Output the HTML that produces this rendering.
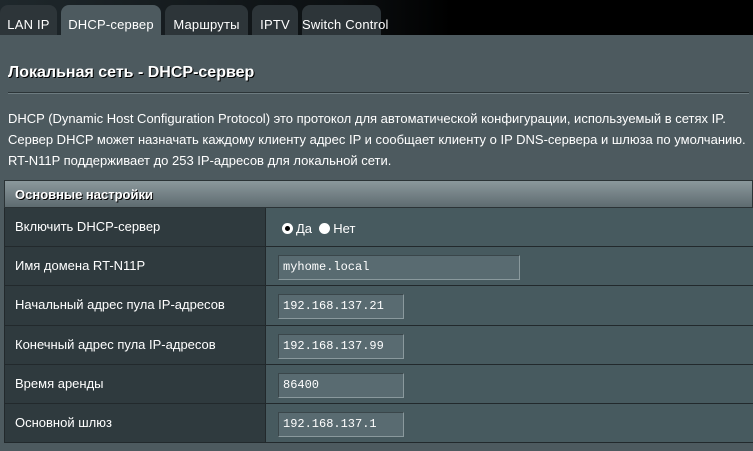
<!DOCTYPE html>
<html><head><meta charset="utf-8"><style>
*{margin:0;padding:0;box-sizing:border-box}
body{width:753px;height:451px;background:#4d5a5f;font-family:"Liberation Sans",Arial,sans-serif;color:#fff;font-size:13px;position:relative;overflow:hidden}
.top{position:absolute;left:0;top:0;width:753px;height:35px;background:linear-gradient(90deg,#1f282c 0%,#0c1012 45%,#000 60%,#000 100%)}
.tab{position:absolute;top:5px;height:30px;background:#2d3539;border-radius:8px 8px 0 0;font-size:13px;line-height:28px;padding-top:6px;text-align:center;color:#fff;white-space:nowrap;letter-spacing:0.2px}
.tab.act{background:#4d5a5f}
h1{position:absolute;left:8px;top:64px;font-size:16px;font-weight:bold;text-shadow:1px 1px 0 #000}
.sep{position:absolute;left:8px;top:92px;width:741px;height:2px;background:#2c3538;border-bottom:1px solid #6d7b80}
.desc{position:absolute;left:8px;top:108px;line-height:21px;font-size:13px}
.tbl{position:absolute;left:4px;top:180px;width:749px}
.hd{height:28px;background:linear-gradient(#8b989c,#5e6b70);border:1px solid #2b3336;font-weight:bold;font-size:13px;line-height:27px;padding-left:10px;text-shadow:1px 1px 0 #000}
.row{display:flex;height:39.2px;border-bottom:1px solid #22292c}
.l{width:262px;background:#2f3a3e;padding-left:10px;line-height:38px;border-right:1px solid #22292c;border-left:1px solid #22292c}
.v{flex:1;background:#475a5f;position:relative}
.in{position:absolute;left:12px;top:8px;height:25px;background:#596b71;border:1px solid #8a999d;border-top-color:#3a464a;border-left-color:#3a464a;font-family:"Liberation Mono",monospace;font-size:12px;line-height:23px;padding-left:4px}
.rad{position:absolute;left:16px;top:13px;font-size:13px;display:flex;align-items:center}
.dot{width:11px;height:11px;border-radius:50%;background:#fff;display:inline-block;margin-right:3px;position:relative}
.dot.on::after{content:"";position:absolute;left:3px;top:3px;width:5px;height:5px;border-radius:50%;background:#000}
</style></head><body>
<div class="top"></div>
<div class="tab" style="left:0;width:57px">LAN IP</div>
<div class="tab act" style="left:61px;width:100px">DHCP-сервер</div>
<div class="tab" style="left:165px;width:83px">Маршруты</div>
<div class="tab" style="left:252px;width:46px">IPTV</div>
<div class="tab" style="left:302px;width:79px">Switch Control</div>
<h1>Локальная сеть - DHCP-сервер</h1>
<div class="sep"></div>
<div class="desc">DHCP (Dynamic Host Configuration Protocol) это протокол для автоматической конфигурации, используемый в сетях IP.<br>Сервер DHCP может назначать каждому клиенту адрес IP и сообщает клиенту о IP DNS-сервера и шлюза по умолчанию.<br>RT-N11P поддерживает до 253 IP-адресов для локальной сети.</div>
<div class="tbl">
<div class="hd">Основные настройки</div>
<div class="row"><div class="l">Включить DHCP-сервер</div><div class="v"><div class="rad"><span class="dot on"></span>Да&nbsp;&nbsp;<span class="dot"></span>Нет</div></div></div>
<div class="row"><div class="l">Имя домена RT-N11P</div><div class="v"><div class="in" style="width:242px">myhome.local</div></div></div>
<div class="row"><div class="l">Начальный адрес пула IP-адресов</div><div class="v"><div class="in" style="width:126px">192.168.137.21</div></div></div>
<div class="row"><div class="l">Конечный адрес пула IP-адресов</div><div class="v"><div class="in" style="width:126px">192.168.137.99</div></div></div>
<div class="row"><div class="l">Время аренды</div><div class="v"><div class="in" style="width:126px">86400</div></div></div>
<div class="row"><div class="l">Основной шлюз</div><div class="v"><div class="in" style="width:126px">192.168.137.1</div></div></div>
</div>
</body></html>
